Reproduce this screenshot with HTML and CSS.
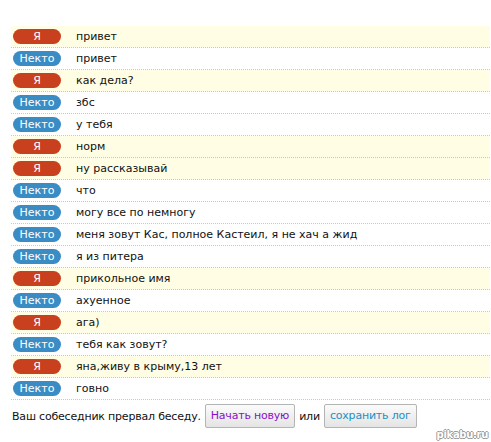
FILE: index.html
```html
<!DOCTYPE html>
<html>
<head>
<meta charset="utf-8">
<link rel="stylesheet" href="styles.css">
</head>
<body>
<div class="chat">
  <div class="row me"><span class="badge red">Я</span><span class="msg">привет</span></div>
  <div class="row"><span class="badge blue">Некто</span><span class="msg">привет</span></div>
  <div class="row me"><span class="badge red">Я</span><span class="msg">как дела?</span></div>
  <div class="row"><span class="badge blue">Некто</span><span class="msg">збс</span></div>
  <div class="row"><span class="badge blue">Некто</span><span class="msg">у тебя</span></div>
  <div class="row me"><span class="badge red">Я</span><span class="msg">норм</span></div>
  <div class="row me"><span class="badge red">Я</span><span class="msg">ну рассказывай</span></div>
  <div class="row"><span class="badge blue">Некто</span><span class="msg">что</span></div>
  <div class="row"><span class="badge blue">Некто</span><span class="msg">могу все по немногу</span></div>
  <div class="row"><span class="badge blue">Некто</span><span class="msg">меня зовут Кас, полное Кастеил, я не хач а жид</span></div>
  <div class="row"><span class="badge blue">Некто</span><span class="msg">я из питера</span></div>
  <div class="row me"><span class="badge red">Я</span><span class="msg">прикольное имя</span></div>
  <div class="row"><span class="badge blue">Некто</span><span class="msg">ахуенное</span></div>
  <div class="row me"><span class="badge red">Я</span><span class="msg">ага)</span></div>
  <div class="row"><span class="badge blue">Некто</span><span class="msg">тебя как зовут?</span></div>
  <div class="row me"><span class="badge red">Я</span><span class="msg">яна,живу в крыму,13 лет</span></div>
  <div class="row"><span class="badge blue">Некто</span><span class="msg">говно</span></div>
  <div class="footer">
    <span>Ваш собеседник прервал беседу.</span>
    <span class="btn btn-new">Начать новую</span>
    <span>или</span>
    <span class="btn btn-save">сохранить лог</span>
  </div>
</div>
<div class="mark">pikabu.ru</div>
</body>
</html>
```
FILE: styles.css
```css
html, body {
  margin: 0;
  padding: 0;
  background: #ffffff;
}
body {
  font-family: "DejaVu Sans", Verdana, sans-serif;
  font-size: 11px;
  color: #111;
  position: relative;
  width: 491px;
  height: 442px;
  overflow: hidden;
}
.chat {
  padding: 26px 0 0 11px;
  width: 479px;
}
.row {
  height: 21px;
  border-bottom: 1px dotted #c8c8c8;
  display: flex;
  align-items: center;
}
.row.me {
  background: #fffde3;
}
.badge {
  width: 48px;
  height: 15px;
  margin-left: 2px;
  border-radius: 8px;
  color: #fff;
  text-align: center;
  line-height: 15px;
  font-size: 11px;
}
.red { background: #c9401e; }
.blue { background: #3a8cc4; }
.msg {
  margin-left: 15px;
}
.footer {
  display: flex;
  align-items: center;
  gap: 4px;
  padding-left: 1px;
  margin-top: 4px;
  height: 24px;
  letter-spacing: -0.2px;
}
.btn {
  display: inline-block;
  height: 22px;
  line-height: 22px;
  padding: 0 5px;
  border: 1px solid #b4b4b4;
  border-radius: 2px;
  background: linear-gradient(#fbfbfb, #e4e4e4);
}
.btn-new { color: #8a10c8; }
.btn-save { color: #1e8fc4; }
.mark {
  position: absolute;
  right: 3px;
  bottom: 2px;
  font-family: "DejaVu Sans", sans-serif;
  font-size: 10px;
  font-weight: bold;
  color: #fff;
  letter-spacing: -0.3px;
  text-shadow: -1px 0 #999, 1px 0 #999, 0 -1px #999, 0 1px #999;
}
```
